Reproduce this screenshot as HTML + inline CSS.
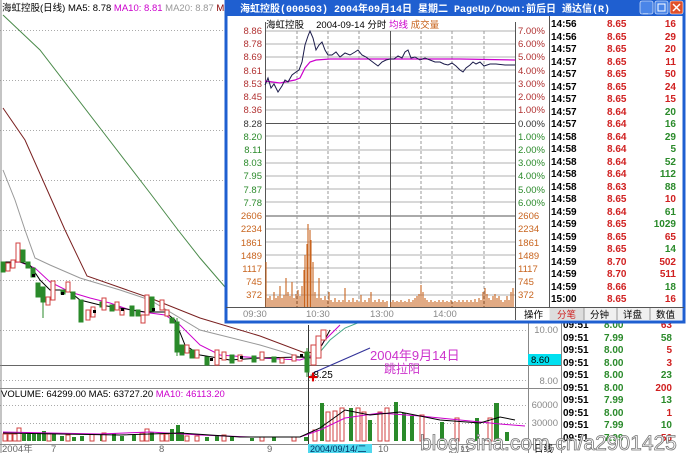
<!DOCTYPE html>
<html><head><meta charset="utf-8"><style>
html,body{margin:0;padding:0;background:#fff;width:690px;height:453px;overflow:hidden}
svg{display:block;font-family:"Liberation Sans","Noto Sans CJK SC",sans-serif}
</style></head><body>
<svg width="690" height="453" viewBox="0 0 690 453" xmlns="http://www.w3.org/2000/svg">
<rect width="690" height="453" fill="#fff"/>
<!-- main chart grid -->
<g stroke="#aaa" stroke-dasharray="1,2" stroke-width="1">
<line x1="0" y1="30.5" x2="528" y2="30.5"/><line x1="0" y1="80.5" x2="528" y2="80.5"/>
<line x1="0" y1="130.5" x2="528" y2="130.5"/><line x1="0" y1="180.5" x2="528" y2="180.5"/>
<line x1="0" y1="230.5" x2="528" y2="230.5"/><line x1="0" y1="280.5" x2="528" y2="280.5"/>
<line x1="0" y1="330.5" x2="528" y2="330.5"/><line x1="0" y1="380.5" x2="528" y2="380.5"/>
<line x1="0" y1="405.5" x2="528" y2="405.5"/><line x1="0" y1="423.5" x2="528" y2="423.5"/>
</g>
<line x1="0" y1="365.5" x2="561" y2="365.5" stroke="#666"/>
<line x1="0" y1="388.5" x2="561" y2="388.5" stroke="#888"/>
<line x1="0" y1="444.5" x2="561" y2="444.5" stroke="#888"/>
<line x1="528.5" y1="0" x2="528.5" y2="453" stroke="#888"/>
<line x1="561.5" y1="320" x2="561.5" y2="453" stroke="#888"/>
<line x1="1" y1="0" x2="1" y2="453" stroke="#888"/>
<line x1="308.5" y1="325" x2="308.5" y2="444" stroke="#333"/>
<!-- header -->
<text x="2" y="11" font-size="9.5" fill="#000">海虹控股(日线) MA5: 8.78 <tspan fill="#c0c">MA10: 8.81</tspan> <tspan fill="#999">MA20: 8.87</tspan> <tspan fill="#800">MA30: 9.</tspan></text>
<!-- MA lines -->
<polyline fill="none" stroke="#4a8a4a" stroke-width="1" points="3,15 40,50 100,128 150,193 178,230 200,258 225,287"/>
<polyline fill="none" stroke="#7a2020" stroke-width="1" points="3,108 25,140 45,185 65,230 87,276 150,298 200,318 260,336 305,353 315,352"/>
<polyline fill="none" stroke="#999" stroke-width="1" points="3,170 15,200 25,230 35,258 50,265 80,278 120,290 150,300 200,330 260,345 300,357 315,355"/>
<polyline fill="none" stroke="#c0c" stroke-width="1" points="3,263 20,262 35,268 50,282 70,292 90,298 110,303 130,310 150,313 165,315 180,325 200,345 220,355 260,358 300,360 315,355 325,340 340,325"/>
<polyline fill="none" stroke="#000" stroke-width="1" points="3,262 20,262 30,265 40,280 50,290 60,290 70,292 80,300 100,305 120,308 145,312 165,312 175,320 185,345 200,355 230,360 260,358 300,357 312,358 322,345 330,330"/>
<polyline fill="none" stroke="#4a8" stroke-width="1" points="315,358 330,340 345,328 360,322"/>
<!-- candles -->
<g stroke-width="1">
<g fill="#2a8a2a" stroke="#2a8a2a">
<rect x="1" y="262" width="4" height="10"/><rect x="21" y="250" width="4" height="12"/><rect x="26" y="262" width="4" height="6"/>
<rect x="31" y="268" width="4" height="9"/><rect x="36" y="283" width="4" height="14"/><rect x="41" y="287" width="4" height="15"/>
<rect x="61" y="290" width="4" height="4"/><rect x="71" y="292" width="4" height="7"/><rect x="79" y="300" width="4" height="22"/>
<rect x="100" y="302" width="4" height="5"/><rect x="110" y="305" width="4" height="6"/><rect x="130" y="306" width="4" height="10"/>
<rect x="136" y="310" width="4" height="6"/><rect x="150" y="297" width="4" height="14"/><rect x="170" y="318" width="4" height="5"/>
<rect x="175" y="322" width="4" height="30"/><rect x="180" y="345" width="4" height="10"/><rect x="190" y="350" width="4" height="8"/>
<rect x="205" y="357" width="4" height="8"/><rect x="230" y="355" width="4" height="8"/><rect x="252" y="356" width="4" height="6"/>
<rect x="272" y="357" width="4" height="5"/><rect x="305" y="352" width="4" height="20"/>
</g>
<g stroke="#2a8a2a"><line x1="43" y1="300" x2="43" y2="318"/><line x1="307" y1="348" x2="307" y2="377"/><line x1="177" y1="318" x2="177" y2="356"/></g>
<g fill="#fff" stroke="#d04040">
<rect x="6" y="263" width="4" height="8"/><rect x="11" y="260" width="4" height="8"/><rect x="16" y="243" width="4" height="19"/>
<rect x="46" y="297" width="4" height="8"/><rect x="51" y="281" width="4" height="19"/><rect x="66" y="282" width="4" height="10"/>
<rect x="86" y="310" width="4" height="10"/><rect x="91" y="307" width="4" height="10"/><rect x="102" y="298" width="4" height="12"/>
<rect x="115" y="302" width="4" height="8"/><rect x="120" y="310" width="4" height="5"/><rect x="141" y="315" width="4" height="8"/>
<rect x="145" y="295" width="4" height="20"/><rect x="160" y="300" width="4" height="10"/><rect x="165" y="310" width="4" height="6"/>
<rect x="185" y="345" width="4" height="8"/><rect x="195" y="350" width="4" height="8"/><rect x="215" y="350" width="4" height="15"/>
<rect x="222" y="352" width="4" height="8"/><rect x="238" y="355" width="4" height="6"/><rect x="260" y="352" width="4" height="8"/>
<rect x="280" y="358" width="4" height="5"/><rect x="292" y="355" width="4" height="6"/><rect x="311" y="345" width="5" height="20"/>
<rect x="316" y="336" width="5" height="22"/><rect x="321" y="330" width="5" height="10"/>
</g>
<g fill="#000"><rect x="32" y="274" width="3" height="3"/><rect x="61" y="292" width="3" height="3"/><rect x="93" y="310" width="3" height="3"/><rect x="121" y="308" width="3" height="3"/><rect x="152" y="308" width="3" height="3"/><rect x="210" y="358" width="3" height="3"/><rect x="240" y="356" width="3" height="3"/><rect x="300" y="354" width="3" height="3"/></g>
</g>
<line x1="313" y1="373" x2="370" y2="348" stroke="#339" stroke-width="1.2"/>
<text x="310" y="378" font-size="10" fill="#000">-8.25</text>
<text x="308" y="381" font-size="10" fill="#d00">✚</text>
<text x="370" y="360" font-size="13" fill="#c3c">2004年9月14日</text>
<text x="384" y="373" font-size="12" fill="#c3c">跳拉阳</text>
<!-- right axis -->
<text x="558" y="333" font-size="9.5" fill="#888" text-anchor="end">10.00</text>
<text x="558" y="384" font-size="9.5" fill="#888" text-anchor="end">8.00</text>
<rect x="528" y="354" width="33" height="11" fill="#00e0f0"/>
<text x="531" y="363" font-size="9.5" fill="#000">8.60</text>
<text x="558" y="408" font-size="9.5" fill="#888" text-anchor="end">60000</text>
<text x="558" y="426" font-size="9.5" fill="#888" text-anchor="end">30000</text>
<!-- volume -->
<text x="1" y="397" font-size="9.5" fill="#000">VOLUME: 64299.00 MA5: 63727.20 <tspan fill="#c0c">MA10: 46113.20</tspan></text>
<g fill="#2a8a2a">
<rect x="22" y="434" width="4" height="7"/><rect x="27" y="434" width="4" height="7"/><rect x="32" y="434" width="4" height="7"/><rect x="37" y="433" width="4" height="8"/><rect x="42" y="431" width="4" height="10"/><rect x="52" y="434" width="4" height="7"/><rect x="60" y="436" width="4" height="5"/><rect x="72" y="437" width="4" height="4"/><rect x="80" y="436" width="4" height="5"/><rect x="100" y="435" width="4" height="6"/><rect x="112" y="433" width="4" height="8"/><rect x="120" y="436" width="4" height="5"/><rect x="132" y="435" width="4" height="6"/><rect x="150" y="432" width="4" height="9"/><rect x="170" y="429" width="4" height="12"/><rect x="176" y="425" width="4" height="16"/><rect x="180" y="432" width="4" height="9"/><rect x="205" y="437" width="4" height="4"/><rect x="215" y="436" width="4" height="5"/><rect x="230" y="437" width="4" height="4"/><rect x="250" y="438" width="4" height="3"/><rect x="272" y="437" width="4" height="4"/><rect x="304" y="437" width="4" height="4"/>
<rect x="320" y="403" width="4" height="38"/><rect x="349" y="408" width="4" height="33"/><rect x="368" y="420" width="4" height="21"/><rect x="394" y="402" width="4" height="39"/><rect x="402" y="413" width="4" height="28"/><rect x="410" y="416" width="4" height="25"/><rect x="440" y="422" width="4" height="19"/><rect x="475" y="418" width="4" height="23"/><rect x="494" y="403" width="5" height="38"/><rect x="505" y="432" width="4" height="9"/>
</g>
<g fill="#fff" stroke="#d04040">
<rect x="3" y="434" width="4" height="7"/><rect x="8" y="434" width="4" height="7"/><rect x="13" y="434" width="4" height="7"/><rect x="17" y="428" width="4" height="13"/><rect x="47" y="434" width="4" height="7"/><rect x="66" y="435" width="4" height="6"/><rect x="90" y="434" width="4" height="7"/><rect x="102" y="433" width="4" height="8"/><rect x="140" y="433" width="4" height="8"/><rect x="145" y="429" width="4" height="12"/><rect x="160" y="434" width="4" height="7"/><rect x="165" y="434" width="4" height="7"/><rect x="185" y="436" width="4" height="5"/><rect x="195" y="436" width="4" height="5"/><rect x="222" y="435" width="4" height="6"/><rect x="260" y="437" width="4" height="4"/><rect x="292" y="437" width="4" height="4"/>
<rect x="313" y="430" width="4" height="11"/><rect x="326" y="412" width="4" height="29"/><rect x="333" y="411" width="4" height="30"/><rect x="340" y="408" width="4" height="33"/><rect x="356" y="408" width="4" height="33"/><rect x="362" y="412" width="4" height="29"/><rect x="378" y="412" width="4" height="29"/><rect x="385" y="408" width="4" height="33"/><rect x="420" y="415" width="4" height="26"/><rect x="455" y="418" width="4" height="23"/><rect x="488" y="418" width="4" height="23"/>
</g>
<polyline fill="none" stroke="#c0c" points="3,432 50,433 100,434 150,432 200,435 250,437 300,437 320,430 345,418 380,413 420,416 460,420 500,424 525,426"/>
<polyline fill="none" stroke="#000" points="3,433 60,434 120,435 180,433 240,437 300,437 320,428 345,410 370,415 400,412 440,420 480,423 500,417 515,420"/>
<!-- date axis -->
<g font-size="9.5" fill="#666"><text x="2" y="452">2004年</text><text x="51" y="452">7</text><text x="159" y="452">8</text><text x="267" y="452">9</text><text x="378" y="452">10</text><text x="460" y="452">11</text><text x="534" y="452" fill="#000">日线</text></g>
<rect x="308" y="444" width="64" height="9" fill="#4fd8ee"/>
<text x="310" y="452" font-size="9" fill="#036">2004/09/14/二</text>
<!-- lower right list -->
<g font-size="10" font-weight="bold">
<g fill="#000"><text x="563" y="328">09:51</text><text x="563" y="341">09:51</text><text x="563" y="353">09:51</text><text x="563" y="366">09:51</text><text x="563" y="378">09:51</text><text x="563" y="391">09:51</text><text x="563" y="403">09:51</text><text x="563" y="416">09:51</text><text x="563" y="428">09:51</text><text x="563" y="441">09:51</text></g>
<g fill="#2a8a2a"><text x="604" y="328">8.00</text><text x="604" y="341">7.99</text><text x="604" y="353">8.00</text><text x="604" y="366">8.00</text><text x="604" y="378">8.00</text><text x="604" y="391">8.00</text><text x="604" y="403">7.99</text><text x="604" y="416">8.00</text><text x="604" y="428">7.99</text><text x="604" y="441">7.99</text></g>
<g text-anchor="end"><text x="672" y="328" fill="#d02020">63</text><text x="672" y="341" fill="#2a8a2a">58</text><text x="672" y="353" fill="#d02020">5</text><text x="672" y="366" fill="#d02020">3</text><text x="672" y="378" fill="#2a8a2a">23</text><text x="672" y="391" fill="#d02020">200</text><text x="672" y="403" fill="#2a8a2a">13</text><text x="672" y="416" fill="#d02020">1</text><text x="672" y="428" fill="#2a8a2a">10</text><text x="672" y="441" fill="#d02020">56</text></g>
</g>
<!-- watermark -->
<text x="420" y="450" font-size="21" fill="#fff" stroke="#777" stroke-width="0.8">blog.sina.com.cn/a2901425</text>
<!-- popup window -->
<rect x="226" y="0" width="458" height="322" fill="#fff" stroke="#1f5fd0" stroke-width="3"/>
<rect x="226" y="0" width="458" height="16" fill="#1f5fd0"/>
<text x="240" y="12" font-size="10" font-weight="bold" fill="#fff" font-family="Liberation Mono,Noto Sans CJK SC,monospace">海虹控股(000503) 2004年09月14日 星期二 PageUp/Down:前后日 通达信(R)</text>
<rect x="640" y="1" width="13" height="13" rx="2" fill="#4a85e8" stroke="#fff" stroke-width="0.6"/>
<rect x="655" y="1" width="13" height="13" rx="2" fill="#4a85e8" stroke="#fff" stroke-width="0.6"/><rect x="658" y="4" width="7" height="7" fill="none" stroke="#fff"/>
<rect x="670" y="1" width="13" height="13" rx="2" fill="#e0502a" stroke="#fff" stroke-width="0.6"/><path d="M673 4l7 7M680 4l-7 7" stroke="#fff" stroke-width="1.5"/>
<text x="643" y="12" font-size="9" fill="#fff">_</text>
<!-- popup chart grid -->
<g stroke="#999" stroke-width="0.8">
<line x1="265" y1="31" x2="515" y2="31"/><line x1="265" y1="44" x2="515" y2="44"/><line x1="265" y1="57" x2="515" y2="57"/><line x1="265" y1="70" x2="515" y2="70"/><line x1="265" y1="83" x2="515" y2="83"/><line x1="265" y1="97" x2="515" y2="97"/><line x1="265" y1="110" x2="515" y2="110"/>
<line x1="265" y1="136" x2="515" y2="136"/><line x1="265" y1="150" x2="515" y2="150"/><line x1="265" y1="163" x2="515" y2="163"/><line x1="265" y1="176" x2="515" y2="176"/><line x1="265" y1="189" x2="515" y2="189"/><line x1="265" y1="202" x2="515" y2="202"/>
<line x1="265" y1="229" x2="515" y2="229"/><line x1="265" y1="242" x2="515" y2="242"/><line x1="265" y1="255" x2="515" y2="255"/><line x1="265" y1="268" x2="515" y2="268"/><line x1="265" y1="282" x2="515" y2="282"/><line x1="265" y1="295" x2="515" y2="295"/>
</g>
<g stroke="#555"><line x1="265" y1="123.5" x2="515" y2="123.5"/><line x1="265" y1="216" x2="515" y2="216"/><line x1="265" y1="307.5" x2="515" y2="307.5"/><line x1="265.5" y1="22" x2="265.5" y2="308"/><line x1="515.5" y1="22" x2="515.5" y2="320"/><line x1="390.5" y1="31" x2="390.5" y2="308"/><line x1="549.5" y1="16" x2="549.5" y2="320"/><line x1="226" y1="307.5" x2="684" y2="307.5"/></g>
<g stroke="#999" stroke-dasharray="3,2"><line x1="297" y1="31" x2="297" y2="307"/><line x1="328" y1="31" x2="328" y2="307"/><line x1="359" y1="31" x2="359" y2="307"/><line x1="421" y1="31" x2="421" y2="307"/><line x1="452" y1="31" x2="452" y2="307"/><line x1="484" y1="31" x2="484" y2="307"/></g>
<text x="266" y="28" font-size="9.5" fill="#000">海虹控股 　2004-09-14 分时 <tspan fill="#c0c">均线</tspan> <tspan fill="#c8641e">成交量</tspan></text>
<g font-size="9.5" text-anchor="end">
<g fill="#b03030"><text x="262" y="34">8.86</text><text x="262" y="47">8.78</text><text x="262" y="60">8.69</text><text x="262" y="74">8.61</text><text x="262" y="87">8.53</text><text x="262" y="100">8.45</text><text x="262" y="113">8.36</text></g>
<text x="262" y="127" fill="#333">8.28</text>
<g fill="#2a8a2a"><text x="262" y="140">8.20</text><text x="262" y="153">8.11</text><text x="262" y="166">8.03</text><text x="262" y="179">7.95</text><text x="262" y="193">7.87</text><text x="262" y="206">7.78</text></g>
<g fill="#c8641e"><text x="262" y="219">2606</text><text x="262" y="232">2234</text><text x="262" y="246">1861</text><text x="262" y="259">1489</text><text x="262" y="272">1117</text><text x="262" y="285">745</text><text x="262" y="298">372</text></g>
</g>
<g font-size="9.5">
<g fill="#b03030"><text x="518" y="34">7.00%</text><text x="518" y="47">6.00%</text><text x="518" y="60">5.00%</text><text x="518" y="74">4.00%</text><text x="518" y="87">3.00%</text><text x="518" y="100">2.00%</text><text x="518" y="113">1.00%</text></g>
<text x="518" y="127" fill="#333">0.00%</text>
<g fill="#2a8a2a"><text x="518" y="140">1.00%</text><text x="518" y="153">2.00%</text><text x="518" y="166">3.00%</text><text x="518" y="179">4.00%</text><text x="518" y="193">5.00%</text><text x="518" y="206">6.00%</text></g>
<g fill="#c8641e"><text x="518" y="219">2606</text><text x="518" y="232">2234</text><text x="518" y="246">1861</text><text x="518" y="259">1489</text><text x="518" y="272">1117</text><text x="518" y="285">745</text><text x="518" y="298">372</text></g>
</g>
<polyline fill="none" stroke="#c0c" stroke-width="1.2" points="265,81 280,83 295,80 300,78 305,68 310,62 316,60 330,59 420,59 460,59 515,60"/>
<polyline fill="none" stroke="#1a1a4a" stroke-width="1" points="265,85 268,78 271,88 274,84 278,92 282,86 285,80 288,82 292,75 296,72 299,70 302,62 305,45 308,36 310,31 313,38 316,50 319,45 322,42 325,50 328,55 332,55 336,52 340,57 345,53 350,55 355,52 358,50 362,55 366,57 370,60 374,63 378,66 382,62 386,60 390,59 394,59 398,56 402,58 405,52 408,50 411,58 415,57 420,60 425,58 430,60 435,62 440,62 444,64 448,65 452,63 456,66 460,70 463,72 466,68 470,65 473,62 476,64 480,62 484,66 490,64 496,64 505,65 515,65"/>
<path stroke="#c8641e" stroke-width="1.1" fill="none" d="M266 307V262M268 307V298M270 307V296M272 307V300M274 307V292M276 307V298M278 307V296M280 307V286M282 307V298M284 307V295M286 307V278M288 307V292M290 307V296M292 307V282M294 307V298M296 307V294M298 307V290M300 307V296M302 307V286M304 307V270M305 307V255M307 307V244M308 307V224M310 307V230M311 307V240M313 307V262M315 307V292M317 307V298M319 307V278M321 307V298M323 307V300M325 307V296M327 307V300M329 307V292M331 307V300M333 307V302M335 307V298M337 307V302M339 307V300M341 307V302M343 307V300M345 307V288M347 307V302M349 307V300M351 307V302M353 307V298M355 307V302M357 307V300M359 307V302M361 307V295M363 307V302M365 307V300M367 307V302M369 307V298M371 307V292M373 307V302M375 307V300M377 307V302M379 307V299M381 307V302M383 307V300M385 307V302M387 307V301M391 307V302M393 307V300M395 307V302M397 307V301M399 307V302M401 307V300M403 307V302M405 307V301M407 307V302M409 307V299M411 307V302M413 307V300M415 307V298M417 307V296M419 307V294M421 307V285M423 307V292M425 307V298M427 307V300M429 307V302M431 307V300M433 307V302M435 307V301M437 307V302M439 307V300M441 307V302M443 307V300M445 307V302M447 307V301M449 307V302M451 307V300M453 307V302M455 307V301M457 307V302M459 307V300M461 307V302M463 307V300M465 307V302M467 307V300M469 307V302M471 307V300M473 307V302M475 307V299M477 307V302M479 307V298M481 307V300M483 307V292M485 307V288M487 307V294M489 307V298M491 307V300M493 307V296M495 307V294M497 307V298M499 307V296M501 307V300M503 307V302M505 307V300M507 307V296M509 307V300M511 307V292M513 307V288"/>
<g font-size="9.5" fill="#888"><text x="243" y="317">09:30</text><text x="306" y="317">10:30</text><text x="370" y="317">13:00</text><text x="433" y="317">14:00</text></g>
<!-- tabs -->
<rect x="549" y="308" width="133" height="12" fill="#f0f0f0"/>
<rect x="550" y="308" width="34" height="12" fill="#ddd"/>
<g stroke="#999"><line x1="584" y1="308" x2="584" y2="320"/><line x1="617" y1="308" x2="617" y2="320"/><line x1="650" y1="308" x2="650" y2="320"/></g>
<g font-size="9.5" fill="#000"><text x="524" y="318">操作</text><text x="557" y="318" fill="#d02020">分笔</text><text x="590" y="318">分钟</text><text x="623" y="318">详盘</text><text x="656" y="318">数值</text></g>
<!-- popup list -->
<g font-size="10" font-weight="bold">
<g fill="#000">
<text x="551" y="27">14:56</text><text x="551" y="40">14:56</text><text x="551" y="52">14:57</text><text x="551" y="65">14:57</text><text x="551" y="77">14:57</text><text x="551" y="90">14:57</text><text x="551" y="102">14:57</text><text x="551" y="115">14:57</text><text x="551" y="127">14:57</text><text x="551" y="140">14:58</text><text x="551" y="152">14:58</text><text x="551" y="165">14:58</text><text x="551" y="177">14:58</text><text x="551" y="190">14:58</text><text x="551" y="202">14:58</text><text x="551" y="215">14:59</text><text x="551" y="227">14:59</text><text x="551" y="240">14:59</text><text x="551" y="252">14:59</text><text x="551" y="265">14:59</text><text x="551" y="277">14:59</text><text x="551" y="290">14:59</text><text x="551" y="302">15:00</text>
</g>
<g fill="#d02020">
<text x="607" y="27">8.65</text><text x="607" y="40">8.65</text><text x="607" y="52">8.65</text><text x="607" y="65">8.65</text><text x="607" y="77">8.65</text><text x="607" y="90">8.65</text><text x="607" y="102">8.65</text><text x="607" y="115">8.64</text><text x="607" y="127">8.64</text><text x="607" y="140">8.64</text><text x="607" y="152">8.64</text><text x="607" y="165">8.64</text><text x="607" y="177">8.64</text><text x="607" y="190">8.63</text><text x="607" y="202">8.65</text><text x="607" y="215">8.64</text><text x="607" y="227">8.65</text><text x="607" y="240">8.65</text><text x="607" y="252">8.65</text><text x="607" y="265">8.70</text><text x="607" y="277">8.70</text><text x="607" y="290">8.66</text><text x="607" y="302">8.65</text>
</g>
<g text-anchor="end">
<text x="676" y="27" fill="#d02020">16</text><text x="676" y="40" fill="#d02020">29</text><text x="676" y="52" fill="#d02020">20</text><text x="676" y="65" fill="#d02020">11</text><text x="676" y="77" fill="#d02020">50</text><text x="676" y="90" fill="#d02020">24</text><text x="676" y="102" fill="#d02020">15</text><text x="676" y="115" fill="#2a8a2a">20</text><text x="676" y="127" fill="#2a8a2a">16</text><text x="676" y="140" fill="#2a8a2a">29</text><text x="676" y="152" fill="#2a8a2a">5</text><text x="676" y="165" fill="#2a8a2a">52</text><text x="676" y="177" fill="#2a8a2a">112</text><text x="676" y="190" fill="#2a8a2a">88</text><text x="676" y="202" fill="#d02020">10</text><text x="676" y="215" fill="#2a8a2a">61</text><text x="676" y="227" fill="#2a8a2a">1029</text><text x="676" y="240" fill="#d02020">65</text><text x="676" y="252" fill="#2a8a2a">14</text><text x="676" y="265" fill="#d02020">502</text><text x="676" y="277" fill="#d02020">511</text><text x="676" y="290" fill="#2a8a2a">18</text><text x="676" y="302" fill="#d02020">16</text>
</g>
</g>
</svg>
</body></html>
